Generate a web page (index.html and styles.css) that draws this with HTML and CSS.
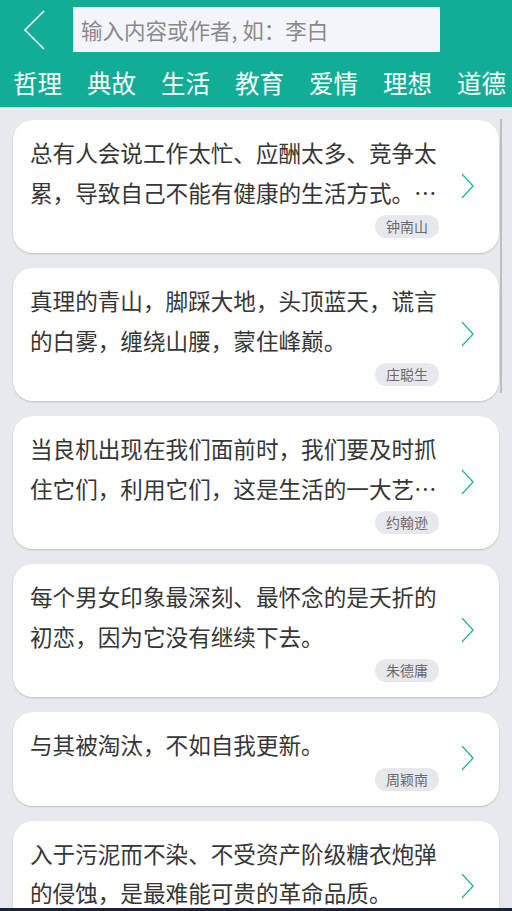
FILE: index.html
```html
<!DOCTYPE html>
<html lang="zh-CN">
<head>
    <meta charset="UTF-8">
    <meta name="viewport" content="width=device-width, initial-scale=1.0">
    <title>名言搜索</title>
    <link rel="stylesheet" href="styles.css">
</head>
<body>
    <div class="header">
        <div class="search-row">
            <div class="back">
                <svg width="24" height="40" viewBox="0 0 24 40">
                    <polyline points="21,1 2,20 21,39" fill="none" stroke="#fff" stroke-width="1.6"/>
                </svg>
            </div>
            <div class="search-box">输入内容或作者, 如：李白</div>
        </div>
        <div class="tabs">
            <span class="tab">哲理</span>
            <span class="tab">典故</span>
            <span class="tab">生活</span>
            <span class="tab">教育</span>
            <span class="tab">爱情</span>
            <span class="tab">理想</span>
            <span class="tab">道德</span>
        </div>
    </div>

    <div class="list">
        <div class="card">
            <div class="card-body">
                <p class="quote">总有人会说工作太忙、应酬太多、竞争太累，导致自己不能有健康的生活方式。其实健康才是最重要的。</p>
                <span class="author">钟南山</span>
            </div>
            <div class="arrow"><svg width="13" height="26" viewBox="0 0 13 26"><polyline points="1,1 12,13 1,25" fill="none" stroke="#35b9a3" stroke-width="1.5"/></svg></div>
        </div>
        <div class="card">
            <div class="card-body">
                <p class="quote">真理的青山，脚踩大地，头顶蓝天，谎言的白雾，缠绕山腰，蒙住峰巅。</p>
                <span class="author">庄聪生</span>
            </div>
            <div class="arrow"><svg width="13" height="26" viewBox="0 0 13 26"><polyline points="1,1 12,13 1,25" fill="none" stroke="#35b9a3" stroke-width="1.5"/></svg></div>
        </div>
        <div class="card">
            <div class="card-body">
                <p class="quote">当良机出现在我们面前时，我们要及时抓住它们，利用它们，这是生活的一大艺术。</p>
                <span class="author">约翰逊</span>
            </div>
            <div class="arrow"><svg width="13" height="26" viewBox="0 0 13 26"><polyline points="1,1 12,13 1,25" fill="none" stroke="#35b9a3" stroke-width="1.5"/></svg></div>
        </div>
        <div class="card">
            <div class="card-body">
                <p class="quote">每个男女印象最深刻、最怀念的是夭折的初恋，因为它没有继续下去。</p>
                <span class="author">朱德庸</span>
            </div>
            <div class="arrow"><svg width="13" height="26" viewBox="0 0 13 26"><polyline points="1,1 12,13 1,25" fill="none" stroke="#35b9a3" stroke-width="1.5"/></svg></div>
        </div>
        <div class="card">
            <div class="card-body">
                <p class="quote">与其被淘汰，不如自我更新。</p>
                <span class="author">周颖南</span>
            </div>
            <div class="arrow"><svg width="13" height="26" viewBox="0 0 13 26"><polyline points="1,1 12,13 1,25" fill="none" stroke="#35b9a3" stroke-width="1.5"/></svg></div>
        </div>
        <div class="card">
            <div class="card-body">
                <p class="quote">入于污泥而不染、不受资产阶级糖衣炮弹的侵蚀，是最难能可贵的革命品质。</p>
                <span class="author">周恩来</span>
            </div>
            <div class="arrow"><svg width="13" height="26" viewBox="0 0 13 26"><polyline points="1,1 12,13 1,25" fill="none" stroke="#35b9a3" stroke-width="1.5"/></svg></div>
        </div>
    </div>

    <div class="scroll-thumb"></div>
    <div class="screen-edge"></div>
</body>
</html>
```

FILE: styles.css
```css
body {
    margin: 0;
    background-color: #e8e9ee;
    font-family: "Noto Sans CJK SC", "Noto Sans", sans-serif;
    color: #363636;
    overflow: hidden;
}
.header {
    background-color: #12ad97;
}
.search-row {
    display: flex;
    align-items: center;
    height: 60px;
}
.back {
    width: 73px;
    display: flex;
    justify-content: flex-start;
    padding-left: 23px;
    box-sizing: border-box;
    margin-top: -1px;
}
.back svg {
    display: block;
}
.search-box {
    width: 367px;
    height: 45px;
    margin-top: -1px;
    background: #f4f5fa;
    color: #8a8a8a;
    font-size: 21.5px;
    line-height: 45px;
    padding-left: 8px;
    box-sizing: border-box;
    white-space: nowrap;
}
.tabs {
    display: flex;
    height: 47px;
    align-items: center;
    padding-left: 13px;
    padding-bottom: 1px;
    box-sizing: border-box;
    gap: 25px;
    white-space: nowrap;
    overflow: hidden;
}
.tab {
    color: #fff;
    font-size: 24.5px;
    line-height: 30px;
    flex: none;
}
.list {
    padding: 13px 13px 0;
    display: flex;
    flex-direction: column;
    gap: 15px;
}
.card {
    display: flex;
    background: #fff;
    border-radius: 20px;
    box-shadow: 0 1px 2px rgba(0,0,0,0.18);
    padding: 13px 0 15px 17px;
}
.card-body {
    width: 409px;
    display: flex;
    flex-direction: column;
}
.quote {
    margin: 0;
    font-size: 22.6px;
    line-height: 39.5px;
    display: -webkit-box;
    -webkit-line-clamp: 2;
    -webkit-box-orient: vertical;
    overflow: hidden;
}
.author {
    align-self: flex-end;
    margin-top: 3px;
    height: 23px;
    line-height: 23px;
    padding: 0 11px;
    border-radius: 12px;
    background: #e7e8ed;
    color: #6a6a6a;
    font-size: 14px;
}
.arrow {
    flex: 1;
    display: flex;
    align-items: center;
    padding-left: 22px;
}
.arrow svg {
    display: block;
}
.scroll-thumb {
    position: fixed;
    top: 119px;
    left: 500px;
    width: 2px;
    height: 274px;
    background: #bdbec3;
}
.screen-edge {
    position: fixed;
    left: 0;
    right: 0;
    bottom: 0;
    height: 3px;
    background: #1c2136;
}
```
